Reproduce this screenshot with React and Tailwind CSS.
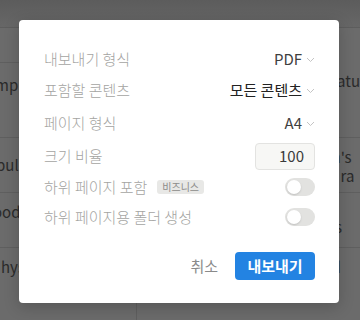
const font = { fontFamily: '"Noto Sans CJK KR", "Noto Sans", sans-serif' };

const Chevron = () => (
  <svg width="9" height="6" viewBox="0 0 9 6" className="ml-[4px] mt-[2px]">
    <path d="M1 1l3.5 3.5L8 1" fill="none" stroke="#c4c4c4" strokeWidth="1" />
  </svg>
);

const Toggle = () => (
  <div className="w-[30px] h-[18px] rounded-full bg-[#e2e2e0] p-[2px] flex items-center">
    <div className="w-[14px] h-[14px] rounded-full bg-white shadow-[0_1px_2px_rgba(0,0,0,0.15)]" />
  </div>
);

const Row = ({ h, label, children }) => (
  <div className={`flex items-center justify-between ${h}`}>
    <div className="flex items-center text-[15px] font-light text-[#a4a4a2]">{label}</div>
    <div className="flex items-center">{children}</div>
  </div>
);

export default function App() {
  return (
    <div className="relative w-[360px] h-[320px] overflow-hidden bg-[#6b6b6b]" style={font}>
      {/* page behind the overlay */}
      <div className="h-[28px] bg-gradient-to-b from-[#5c5c5c] to-[#676767] border-b border-[#5d5d5d]" />
      <div className="flex h-[292px]">
        <div className="w-[147px] border-r border-[#5f5f5f] text-[15px] leading-[20px] text-[#2a2a2a] flex flex-col">
          <div className="h-[35px] border-b border-[#5f5f5f]" />
          <div className="h-[75px] border-b border-[#5f5f5f] pt-[12px] -ml-[5px]">mp</div>
          <div className="h-[55px] border-b border-[#5f5f5f] pt-[17px] -ml-[4px]">puls</div>
          <div className="h-[55px] border-b border-[#5f5f5f] pt-[9px] -ml-[7px]">ood</div>
          <div className="h-[55px] pt-[9px] ml-[1px]">hys</div>
        </div>
        <div className="flex-1 text-[15px] leading-[20px] text-[#2a2a2a] flex flex-col">
          <div className="h-[110px] border-b border-[#5f5f5f] pl-[195px] pt-[43px]">ratu</div>
          <div className="h-[55px] border-b border-[#5f5f5f] pl-[195px] pt-[9px] leading-[19px] flex flex-col">
            <span>n's</span>
            <span>t ra</span>
          </div>
          <div className="h-[55px] border-b border-[#5f5f5f] pt-[4px] leading-[20px] flex flex-col">
            <span className="pl-[195px]">l</span>
            <span className="pl-[190px]">es</span>
          </div>
          <div className="h-[55px] pl-[195px] pt-[9px]">d</div>
        </div>
      </div>

      {/* export dialog */}
      <div className="absolute left-[19px] top-[20px] w-[320px] h-[283px] bg-white rounded-[4px] shadow-[0_4px_16px_rgba(0,0,0,0.2)] pl-[25px] pr-[24px] pt-[24px] flex flex-col">
        <Row h="h-[30px]" label="내보내기 형식">
          <span className="text-[15px] text-[#3f3f3f]">PDF</span>
          <Chevron />
        </Row>
        <Row h="h-[32px]" label="포함할 콘텐츠">
          <span className="text-[15px] text-[#222]">모든 콘텐츠</span>
          <Chevron />
        </Row>
        <Row h="h-[34px]" label="페이지 형식">
          <span className="text-[15px] text-[#3f3f3f]">A4</span>
          <Chevron />
        </Row>
        <Row h="h-[32px]" label="크기 비율">
          <div className="w-[60px] h-[27px] rounded-[4px] border border-[#e3e3e1] bg-[#f7f7f5] flex items-center justify-end pr-[10px] text-[15px] text-[#3a3a3a]">
            100
          </div>
        </Row>
        <Row
          h="h-[30px]"
          label={
            <>
              하위 페이지 포함
              <span className="ml-[10px] h-[14px] px-[5px] rounded-[3px] bg-[#e8e8e6] text-[10px] font-normal leading-[14px] text-[#8c8c8a]">
                비즈니스
              </span>
            </>
          }
        >
          <Toggle />
        </Row>
        <Row h="h-[30px]" label="하위 페이지용 폴더 생성">
          <Toggle />
        </Row>
        <div className="flex items-center justify-end mt-[20px] gap-[17px]">
          <span className="text-[15px] text-[#8a8a8a]">취소</span>
          <div className="w-[80px] h-[28px] rounded-[4px] bg-[#2383e2] flex items-center justify-center text-[15px] font-bold text-white">
            내보내기
          </div>
        </div>
      </div>
    </div>
  );
}
